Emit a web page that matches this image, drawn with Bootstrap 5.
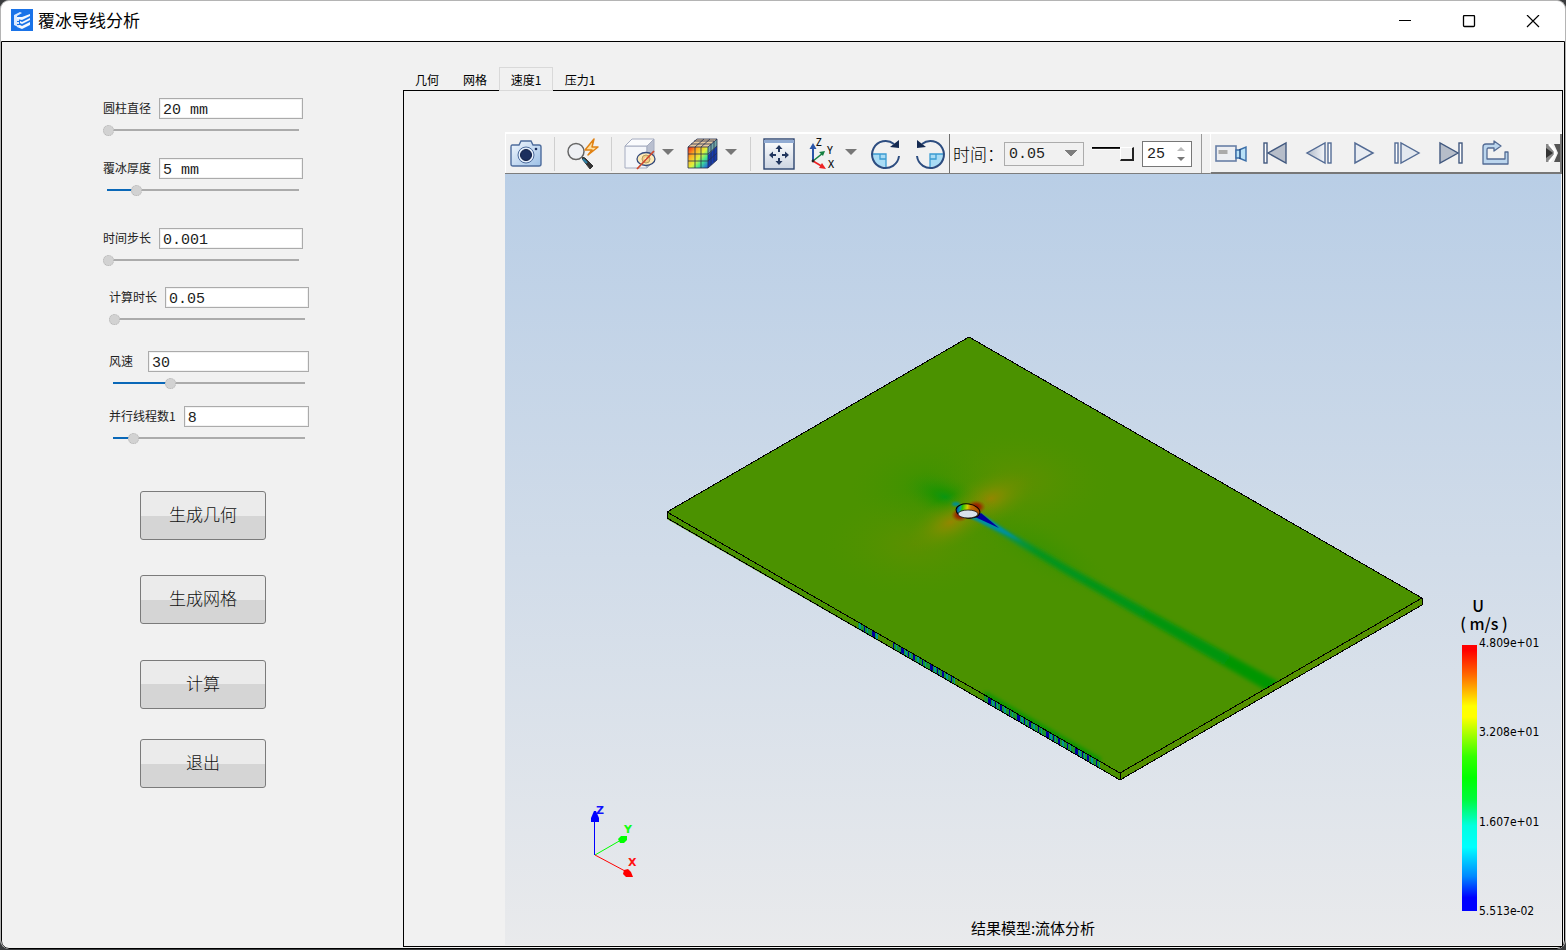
<!DOCTYPE html>
<html lang="zh-CN">
<head>
<meta charset="utf-8">
<meta name="viewport" content="width=device-width, initial-scale=1">
<title>覆冰导线分析</title>
<link href="https://cdn.jsdelivr.net/npm/bootstrap@5.3.0/dist/css/bootstrap.min.css" rel="stylesheet">
<style>
  :root { --ui: "Noto Sans CJK SC", sans-serif; --mono: "Liberation Mono", "Noto Sans CJK SC", monospace; }
  body { background: #3a3c3e; font-family: var(--ui); color: #000; font-size: 12px; }
  .win { min-height: calc(100vh - 1px); background: #fff; border: 1px solid #b4b4b4; border-bottom: 0; border-radius: 9px; overflow: hidden; }
  .titlebar { height: 40px; padding: 0 0 2px 10px; }
  .titlebar h1 { font-size: 17px; line-height: 24px; font-weight: 400; margin: 0 0 0 5px; }
  .winbtn { width: 64px; height: 38px; padding: 0; border: 0; background: none; }
  .winbody { background: #f1f1f1; border: 1px solid #000; border-radius: 0 0 8px 8px; padding: 0 1px 1px 0; }
  .side { width: 401px; flex: none; padding-top: 56px; }
  .params { display: grid; grid-template-rows: 60px 70px 59px 64px 55px 60px; padding-left: 101px; }
  .param { width: 200px; }
  .param.inset { margin-left: 6px; }
  .param label { line-height: 20px; color: #222; white-space: nowrap; }
  .param .lab-gap { margin-right: 8px; }
  .param .lab-gap-wide { margin-right: 15px; }
  .field { min-width: 0; height: 21px; border: 1px solid #ababab; border-radius: 0; background: #fff; box-shadow: inset 0 0 0 1px #f2f2f2; padding: 3px 3px 0; font: 15px/18px var(--mono); color: #222; }
  .slide { -webkit-appearance: none; appearance: none; display: block; width: 196px; height: 16px; margin: 3px 0 0; background: none; }
  .slide::-webkit-slider-runnable-track { height: 2px; background: linear-gradient(90deg, transparent 4px, #0a68b8 4px, #0a68b8 var(--fill), #ababab var(--fill)); }
  .slide::-webkit-slider-thumb { -webkit-appearance: none; width: 11px; height: 11px; margin-top: -4px; border: 1px dotted #b4b4b4; border-radius: 50%; background: #d2d2d2; }
  .actions { display: grid; grid-template-rows: 84px 85px 79px 49px; padding: 25px 0 0 138px; }
  .act { width: 126px; height: 49px; padding: 0 0 3px; border: 1px solid #7b7b7b; border-radius: 3px; background: linear-gradient(#ebebeb 50%, #d5d5d5 50%); font-size: 17px; line-height: 24px; color: #111; font-weight: 300; }
  .tabs { padding-top: 25px; margin-bottom: -1px; position: relative; }
  .tabs button { height: 24px; padding: 1px 10px 0; border: 1px solid transparent; border-bottom: 0; background: none; line-height: 18px; color: #000; flex: none; width: 48px; white-space: nowrap; }
  .tabs button.active, .tabs button.wide-tab { width: 54px; }
  .tabs button.active { background: #f1f1f1; border-color: #d9d9d9; border-bottom: 1px solid #d9d9d9; }
  .pane { border: 1px solid #000; padding: 41px 0 1px 101px; min-width: 0; }
  .tools { height: 42px; border-top: 2px solid #fff; border-bottom: 1px solid #7d7d7d; }
  .tool-a { padding: 0 3px 0 4px; border-left: 1px solid #fff; border-right: 1px solid #6f6f6f; height: 39px; }
  .tool-a svg { overflow: visible; }
  .ic { width: 32px; height: 32px; padding: 0; border: 0; background: none; flex: none; line-height: 0; }
  .ic + .ic { margin-left: 12px; }
  .drop { width: 24px; height: 32px; padding: 0 0 4px; border: 0; background: none; margin-right: 7px; flex: none; line-height: 0; }
  .sep { width: 1px; height: 34px; background: #cfcfcf; margin: 0 12px; flex: none; }
  .drop + .sep { margin-left: 0; }
  .tool-b { height: 39px; padding: 0 9px 0 3px; border-right: 1px solid #9a9a9a; }
  .tool-b label { width: 51px; font-size: 17px; line-height: 24px; font-weight: 300; white-space: nowrap; color: #000; }
  .timesel { -webkit-appearance: none; appearance: none; width: 80px; height: 24px; border: 1px solid #acacac; border-radius: 0; padding: 2px 4px 0; font: 15px/20px var(--mono); color: #222;
    background: linear-gradient(to bottom right, #7d7d7d 50%, transparent 50%) 66px 7px/6px 6px no-repeat, linear-gradient(to bottom left, #7d7d7d 50%, transparent 50%) 60px 7px/6px 6px no-repeat, #f1f1f1; }
  .speed { -webkit-appearance: none; appearance: none; width: 42px; height: 16px; margin: 0 8px; background: none; }
  .speed::-webkit-slider-runnable-track { height: 14px; background: linear-gradient(#000 1px, #555 2px, #fff 2px, #fff 3px, transparent 3px); }
  .speed::-webkit-slider-thumb { -webkit-appearance: none; width: 14px; height: 14px; background: #f1f1f1; border: 1px solid #fff; border-right: 2px solid #222; border-bottom: 2px solid #222; }
  .spin { width: 50px; height: 26px; border: 1px solid #777; background: #fff; padding: 0 6px 0 4px; }
  .spin input { width: 26px; border: 0; padding: 2px 0 0; background: none; font: 15px/20px var(--mono); color: #222; outline: 0; }
  .tool-c { margin-left: 8px; height: 40px; margin-bottom: -1px; padding-left: 4px; border-left: 1px solid #fff; border-bottom: 2px solid #777; border-right: 2px solid #777; overflow: hidden; }
  .more { width: 14px; height: 22px; padding: 0; border: 0; background: none; line-height: 0; }
  .scene { position: relative; background: linear-gradient(#b9cee6, #e9eaec); min-height: 480px; margin-right: 1px; }
  .scene > svg { position: absolute; inset: 0; width: 100%; height: 100%; }
  .caption { position: absolute; left: 0; right: 0; bottom: 7px; text-align: center; font-size: 15px; line-height: 20px; }
  .legend { position: absolute; right: 17px; bottom: 34px; width: 82px; }
  .legend-head { width: 50px; margin: 0 0 13px -3px; text-align: center; font-size: 16px; font-weight: 500; white-space: nowrap; }
  .legend-head div { line-height: 18px; }
  .legend-head div:first-child { padding-right: 12px; }
  .ramp { width: 15px; height: 266px; background: linear-gradient(#f00 2%, #f60 11%, #ff0 23%, #ff0 27%, #3f0 42%, #0f0 50%, #00fa3c 58%, #00ffe0 68%, #0ff 76%, #08f 87%, #00f 95%); }
  .ticks { height: 284px; margin: -10px 0 -8px 2px; font: 12px/16px "DejaVu Sans Condensed", "DejaVu Sans", sans-serif; font-stretch: condensed; }
</style>
</head>
<body>
<div class="win d-flex flex-column">
  <header class="titlebar d-flex align-items-center">
    <svg width="22" height="22" viewBox="0 0 22 22" aria-hidden="true"><rect width="22" height="22" fill="#1a73e8"/><path d="M3 6l6-3 2 1-5 3v10l1 1-4-2z" fill="#dceaff"/><path d="M6 8h5l8-3v2l-8 4-5-1zM9 12l2 1 8-4v2l-8 4-2-1zM9 16l2 1 8-4v3l-8 4-5-2v-2z" fill="#f5f9ff"/><path d="M7 10v8" stroke="#dceaff" stroke-width="2" stroke-dasharray="2 1"/></svg>
    <h1>覆冰导线分析</h1>
    <div class="ms-auto d-flex">
      <button class="winbtn" type="button" aria-label="最小化"><svg width="14" height="14"><path d="M1 5.500h12" stroke="#000"/></svg></button>
      <button class="winbtn" type="button" aria-label="最大化"><svg width="14" height="14"><rect x="1.5" y=".5" width="11" height="11" rx="1" fill="none" stroke="#000" stroke-width="1.3"/></svg></button>
      <button class="winbtn" type="button" aria-label="关闭"><svg width="14" height="14"><path d="M1 0l12 12M13 0L1 12" stroke="#000" stroke-width="1.2"/></svg></button>
    </div>
  </header>

  <div class="winbody d-flex flex-grow-1">
    <form class="side">
      <div class="params">
        <div class="param"><div class="d-flex"><label class="lab-gap" for="p1">圆柱直径</label><input class="field flex-fill" id="p1" value="20 mm"></div><input type="range" class="slide" aria-label="圆柱直径" value="0" style="--fill:4px"></div>
        <div class="param"><div class="d-flex"><label class="lab-gap" for="p2">覆冰厚度</label><input class="field flex-fill" id="p2" value="5 mm"></div><input type="range" class="slide" aria-label="覆冰厚度" value="15" style="--fill:34px"></div>
        <div class="param"><div class="d-flex"><label class="lab-gap" for="p3">时间步长</label><input class="field flex-fill" id="p3" value="0.001"></div><input type="range" class="slide" aria-label="时间步长" value="0" style="--fill:4px"></div>
        <div class="param inset"><div class="d-flex"><label class="lab-gap" for="p4">计算时长</label><input class="field flex-fill" id="p4" value="0.05"></div><input type="range" class="slide" aria-label="计算时长" value="0" style="--fill:4px"></div>
        <div class="param inset"><div class="d-flex"><label class="lab-gap-wide" for="p5">风速</label><input class="field flex-fill" id="p5" value="30"></div><input type="range" class="slide" aria-label="风速" value="30" style="--fill:60px"></div>
        <div class="param inset"><div class="d-flex"><label class="lab-gap" for="p6">并行线程数1</label><input class="field flex-fill" id="p6" value="8"></div><input type="range" class="slide" aria-label="并行线程数1" value="10" style="--fill:24px"></div>
      </div>
      <div class="actions">
        <button class="act" type="button">生成几何</button>
        <button class="act" type="button">生成网格</button>
        <button class="act" type="button">计算</button>
        <button class="act" type="button">退出</button>
      </div>
    </form>

    <main class="d-flex flex-column flex-grow-1 overflow-hidden">
      <div class="tabs d-flex" role="tablist">
        <button type="button" role="tab">几何</button>
        <button type="button" role="tab">网格</button>
        <button type="button" role="tab" class="active" aria-selected="true">速度1</button>
        <button type="button" role="tab" class="wide-tab">压力1</button>
      </div>
      <section class="pane d-flex flex-column flex-grow-1">
        <div class="tools d-flex">
          <div class="tool-a d-flex align-items-center">
            <button class="ic" type="button" aria-label="截图"><svg width="32" height="32"><defs><linearGradient id="cam" x1="0" y1="0" x2="1" y2="1"><stop stop-color="#f2f7fd"/><stop offset="1" stop-color="#9cc0e6"/></linearGradient></defs><path d="M2 7h7l2-4h10l2 4h6q2 0 2 2v17q0 2-2 2H3q-2 0-2-2V9q0-2 1-2z" fill="url(#cam)" stroke="#4d6c9c" stroke-width="1.4"/><circle cx="16" cy="17" r="8" fill="#e4eefa" stroke="#4d6c9c"/><circle cx="16" cy="17" r="5.5" fill="#1b2f5e" stroke="#0e1d42"/><circle cx="26" cy="11" r="1.3" fill="#1b2f5e"/></svg></button>
            <span class="sep"></span>
            <button class="ic" type="button" aria-label="快速缩放"><svg width="32" height="32"><path d="M15 19l3 1 8 8-3 3-7-9z" fill="#333" stroke="#333"/><path d="M16 21l4 4" stroke="#2a7fa5" stroke-width="2"/><circle cx="9" cy="13.500" r="8" fill="#eef0f4" stroke="#666" stroke-width="1.5"/><path d="M27 1L18 12h7l-4 5 10-8h-6z" fill="#ffe0a0" stroke="#e08214" stroke-width="1.5" stroke-linejoin="round"/></svg></button>
            <span class="sep"></span>
            <button class="ic" type="button" aria-label="显示隐藏"><svg width="32" height="32"><path d="M1 8h22v22H1z" fill="#f4f6fa" stroke="#a5acc0"/><path d="M1 8l7-7h22l-7 7z" fill="#fafbfd" stroke="#a5acc0"/><path d="M30 1l-7 7v22l7-8z" fill="#b9bfcf" stroke="#a5acc0"/><ellipse cx="22" cy="21" rx="9" ry="6.500" fill="#fdeab8" stroke="#344a7c" stroke-width="1.3"/><circle cx="22" cy="21" r="4" fill="#f3cd80" stroke="#b39a62"/><circle cx="22" cy="21" r="1.500" fill="#fff"/><path d="M30 13L13 31" stroke="#d04a2e" stroke-width="1.8"/></svg></button>
            <button class="drop" type="button" aria-label="显示选项"><svg width="12" height="6"><path d="M0 0h12L6 6z" fill="#777"/></svg></button>
            <button class="ic" type="button" aria-label="云图"><svg width="32" height="32"><defs><linearGradient id="cub" x1="0" y1=".1" x2="1" y2="1"><stop stop-color="#f0351c"/><stop offset=".25" stop-color="#ffae20"/><stop offset=".5" stop-color="#dff23c"/><stop offset=".7" stop-color="#44e98e"/><stop offset="1" stop-color="#1b50ea"/></linearGradient></defs><path d="M1 9h20v21H1z" fill="url(#cub)"/><path d="M1 9l9-8h20l-9 8z" fill="#e6c8a0"/><path d="M21 9l9-8v21l-9 8z" fill="#173bb0"/><path d="M21 9l9-8v7l-9 9z" fill="#71a9a8"/><path d="M1 9h20v21H1zM1 16h20l9-8M1 23h20l9-8M8 9v21M14 9v21M1 9l9-8h20l-9 8M8 9l9-8M14 9l9-8M4 6h20v21M7 3h20v21M21 30l9-8V1" fill="none" stroke="#26304d" stroke-opacity=".8"/></svg></button>
            <button class="drop" type="button" aria-label="云图选项"><svg width="12" height="6"><path d="M0 0h12L6 6z" fill="#777"/></svg></button>
            <span class="sep"></span>
            <button class="ic" type="button" aria-label="适应窗口"><svg width="32" height="32"><defs><linearGradient id="fit" x1="0" y1="0" x2="0" y2="1"><stop stop-color="#fff"/><stop offset="1" stop-color="#cdd5e2"/></linearGradient></defs><rect x="1" y="1" width="30" height="30" fill="url(#fit)" stroke="#2d4570" stroke-width="1.4"/><path d="M1 3.500h30" stroke="#91abd3" stroke-width="3"/><path d="M16 8v6M16 20v6M7 17h6M19 17h6" stroke="#22365e" stroke-width="2"/><path d="M12.500 11L16 7l3.500 4zM12.500 23l3.500 4 3.500-4zM10 13.500L6 17l4 3.500zM22 13.500l4 3.500-4 3.500z" fill="#22365e"/></svg></button>
            <button class="ic" type="button" aria-label="视图方向"><svg width="32" height="32"><path d="M6 23V8" stroke="#2b55a8" stroke-width="2"/><path d="M2.500 11L6 5l3.500 6z" fill="#2b55a8"/><path d="M6 23l10-8" stroke="#158040" stroke-width="1.6"/><path d="M18 13l-6 1 4 4z" fill="#158040"/><path d="M6 23l10 6" stroke="#e22" stroke-width="1.6"/><path d="M19 31l-7-1 3-5z" fill="#e22"/><circle cx="6" cy="23" r="1.400" fill="#222"/><g font-family="Noto Sans" font-size="10" font-weight="500" fill="#111"><text x="9" y="8">Z</text><text x="20" y="16">Y</text><text x="21" y="30">X</text></g></svg></button>
            <button class="drop" type="button" aria-label="视图选项"><svg width="12" height="6"><path d="M0 0h12L6 6z" fill="#777"/></svg></button>
            <button class="ic" type="button" aria-label="顺时针旋转"><svg width="32" height="32"><path d="M2 16h14v13Q3 29 2 16z" fill="#a9dcf5"/><path d="M2 16h14v13M10 16v5h6" fill="none" stroke="#3a9bd1" stroke-width="1.3"/><path d="M29 18a13.500 13.500 0 1 1-5-12" fill="none" stroke="#2d4d80" stroke-width="2"/><path d="M29 2v8l-9-1z" fill="#152a52"/></svg></button>
            <button class="ic" type="button" aria-label="逆时针旋转"><svg width="32" height="32"><path d="M30 16H16v13q13 0 14-13z" fill="#a9dcf5"/><path d="M30 16H16v13M22 16v5h-6" fill="none" stroke="#3a9bd1" stroke-width="1.3"/><path d="M3 18a13.500 13.500 0 1 0 5-12" fill="none" stroke="#2d4d80" stroke-width="2"/><path d="M3 2v8l9-1z" fill="#152a52"/></svg></button>
          </div>
          <div class="tool-b d-flex align-items-center">
            <label for="tm">时间：</label>
            <select id="tm" class="timesel"><option>0.05</option></select>
            <input type="range" class="speed" aria-label="帧位置" value="100">
            <div class="spin d-flex align-items-center justify-content-between"><input type="text" aria-label="帧率" value="25"><svg width="8" height="14"><path d="M0 4h8L4 0z" fill="#bbb"/><path d="M0 10h8l-4 4z" fill="#777"/></svg></div>
          </div>
          <div class="tool-c d-flex align-items-center flex-grow-1">
            <svg width="0" height="0" class="position-absolute"><defs><linearGradient id="pl"><stop stop-color="#aeb8c8"/><stop offset="1" stop-color="#f4f6fa"/></linearGradient></defs></svg>
            <button class="ic" type="button" aria-label="录制"><svg width="32" height="32"><rect x="1" y="9" width="20" height="15" fill="#eceef2" stroke="#687fa6" stroke-width="1.6"/><rect x="3.500" y="13" width="9" height="4" fill="#aaa"/><path d="M21 13h3l7-3v14l-7-3h-3z" fill="#b8e1f7" stroke="#3b6ea8" stroke-width="1.4"/><path d="M25 12v10" stroke="#234d86" stroke-width="1.5"/></svg></button>
            <button class="ic" type="button" aria-label="第一帧"><svg width="32" height="32"><path d="M27 6v20L9 16z" fill="#b6bdc9" stroke="#42597f" stroke-width="1.4"/><rect x="5" y="6" width="3" height="20" fill="#fff" stroke="#42597f" stroke-width="1.400"/></svg></button>
            <button class="ic" type="button" aria-label="上一帧"><svg width="32" height="32"><path d="M22 6v20L4 16z" fill="url(#pl)" stroke="#536b94" stroke-width="1.4"/><rect x="25" y="6" width="3" height="20" fill="#fff" stroke="#536b94" stroke-width="1.400"/></svg></button>
            <button class="ic" type="button" aria-label="播放"><svg width="32" height="32"><path d="M8 6v20l18-10z" fill="#e8ecf2" stroke="#536b94" stroke-width="1.5"/></svg></button>
            <button class="ic" type="button" aria-label="下一帧"><svg width="32" height="32"><path d="M10 6v20l18-10z" fill="#e3e8ef" stroke="#536b94" stroke-width="1.4"/><rect x="4" y="6" width="3" height="20" fill="#fff" stroke="#536b94" stroke-width="1.400"/></svg></button>
            <button class="ic" type="button" aria-label="最后一帧"><svg width="32" height="32"><path d="M5 6v20l18-10z" fill="#b6bdc9" stroke="#42597f" stroke-width="1.4"/><rect x="24" y="6" width="3" height="20" fill="#fff" stroke="#42597f" stroke-width="1.400"/></svg></button>
            <button class="ic" type="button" aria-label="导出"><svg width="32" height="32"><path d="M7 7h8V4l7 5-7 5v-3h-6q-1 0-1 2v9h18v-7h3v12H4V10q0-3 3-3z" fill="#bcd6ee" stroke="#536b94" stroke-width="1.3" stroke-linejoin="round"/></svg></button>
            <button class="more ms-auto" type="button" aria-label="更多"><svg width="14" height="22"><path d="M0 2h3l6 9-6 9H0z" fill="#888"/><path d="M0 6l7 5-7 5z" fill="#333"/><path d="M8 2h6v18H8l4-9z" fill="#555"/><path d="M3 2l6 7v4l-6 7" fill="none" stroke="#fff" stroke-width="2.500"/></svg></button>
          </div>
        </div>

        <div class="scene flex-grow-1">
          <svg viewBox="505 174 1056 771" role="img" aria-label="流速分布云图">
            <defs>
              <clipPath id="top"><path d="M969 337L1422 598 1120 773 667 512z"/></clipPath>
              <clipPath id="edge"><path d="M858 622l20 12v6l-20-12zM893 642l62 36v6l-62-36zM984 695l116 67v6l-116-67z"/></clipPath>
              <radialGradient id="gr"><stop stop-color="#009614"/><stop offset=".3" stop-color="#109400" stop-opacity=".75"/><stop offset="1" stop-color="#3c9300" stop-opacity="0"/></radialGradient>
              <radialGradient id="or"><stop stop-color="#a08400"/><stop offset=".3" stop-color="#8b8d00" stop-opacity=".75"/><stop offset="1" stop-color="#5b9300" stop-opacity="0"/></radialGradient>
              <radialGradient id="rd"><stop stop-color="#900"/><stop offset=".5" stop-color="#9a2800" stop-opacity=".8"/><stop offset="1" stop-color="#a05000" stop-opacity="0"/></radialGradient>
              <linearGradient id="wake" gradientUnits="userSpaceOnUse" x1="980" y1="516" x2="1275" y2="688"><stop stop-color="#009090"/><stop offset=".1" stop-color="#009360"/><stop offset=".2" stop-color="#009420"/><stop offset="1" stop-color="#009600"/></linearGradient>
              <linearGradient id="ring"><stop stop-color="#0a30b0"/><stop offset=".15" stop-color="#00a0a0"/><stop offset=".25" stop-color="#2cc000"/><stop offset=".45" stop-color="#d0d000"/><stop offset=".6" stop-color="#c07000"/><stop offset="1" stop-color="#a04400"/></linearGradient>
              <pattern id="bars" width="29" height="20" patternUnits="userSpaceOnUse"><path fill="#1a9630" d="M0 0h29v20H0z"/><path fill="#0000a0" d="M2 0h3v20H2zM9 0h1v20H9zM14 0h2v20h-2zM23 0h1v20h-1z"/><path fill="#009898" d="M6 0h2v20H6zM11 0h1v20h-1zM18 0h2v20h-2zM26 0h1v20h-1z"/></pattern>
              <filter id="b1" x="-20%" y="-20%" width="140%" height="140%"><feGaussianBlur stdDeviation="1"/></filter>
              <filter id="b3" x="-20%" y="-20%" width="140%" height="140%"><feGaussianBlur stdDeviation="2"/></filter>
            </defs>
            <path d="M667 512l453 261v7L667 519z" fill="#4a9100"/>
            <path d="M1422 598l-302 175v7l302-175z" fill="#559000"/>
            <path d="M969 337L1422 598 1120 773 667 512z" fill="#4b9200"/>
            <g clip-path="url(#top)">
              <ellipse cx="930" cy="487" rx="80" ry="46" fill="url(#gr)" opacity=".22"/>
              <ellipse cx="1018" cy="482" rx="95" ry="55" fill="url(#or)" opacity=".22"/>
              <ellipse cx="915" cy="544" rx="95" ry="52" fill="url(#or)" opacity=".2"/>
              <ellipse cx="1045" cy="552" rx="80" ry="26" transform="rotate(30 1045 552)" fill="url(#gr)" opacity=".2"/>
              <ellipse cx="945" cy="497" rx="44" ry="22" transform="rotate(20 945 497)" fill="url(#gr)" opacity=".85"/>
              <ellipse cx="990" cy="499" rx="48" ry="26" transform="rotate(-22 990 499)" fill="url(#or)" opacity=".85"/>
              <ellipse cx="951" cy="522" rx="48" ry="25" transform="rotate(-26 951 522)" fill="url(#or)" opacity=".85"/>
              <path d="M976 513l92 53 211 116-10 10-203-118-81-50z" fill="url(#wake)" filter="url(#b3)"/>
              <path d="M968 517l54 25-40-28z" fill="#0090a0" filter="url(#b1)"/>
              <path d="M975 517l24 11-18-15z" fill="#00009c"/>
              <path d="M1290 517l115 66" stroke="#009800" stroke-width="3" filter="url(#b1)"/>
              <path d="M984 694l116 67" stroke="#009600" stroke-width="5" filter="url(#b3)"/>
            </g>
            <ellipse cx="976" cy="507" rx="10" ry="7" fill="url(#rd)"/><ellipse cx="960" cy="515" rx="9" ry="7" fill="url(#rd)"/><ellipse cx="956" cy="504" rx="4" ry="2" fill="#009090" filter="url(#b1)"/>
            <ellipse cx="968" cy="511" rx="12" ry="7" transform="rotate(8 968 511)" fill="url(#ring)" stroke="#000"/>
            <ellipse cx="968" cy="514" rx="10" ry="4" fill="#d9e2ec" stroke="#111" stroke-width=".8"/>
            <path d="M850 610h270v180H850z" fill="url(#bars)" clip-path="url(#edge)"/>
            <path d="M969 337L1422 598 1120 773 667 512zM667 512v6l453 262 302-175v-7M1120 773v7" fill="none" stroke="#000" shape-rendering="crispEdges"/>
            <path d="M594.500 855v-35" stroke="#00f"/><path d="M591 822h8v-4l-3-7h-2l-3 7z" fill="#00f"/>
            <path d="M595 855l26-15" stroke="#0f0"/><path d="M627 836v4l-3 3h-4l-2-4 3-3z" fill="#0f0"/>
            <path d="M595 855l30 16" stroke="#f00"/><path d="M633 877h-7l-3-3 1-4 4-1 3 3z" fill="#f00"/>
            <g font-family="DejaVu Sans" font-size="11" font-weight="700"><text x="596" y="814" fill="#11f">Z</text><text x="624" y="833" fill="#1f1">Y</text><text x="628" y="866" fill="#f11">X</text></g>
          </svg>
          <div class="legend">
            <div class="legend-head"><div>U</div><div>( m/s )</div></div>
            <div class="d-flex">
              <div class="ramp"></div>
              <div class="ticks d-flex flex-column justify-content-between"><span>4.809e+01</span><span>3.208e+01</span><span>1.607e+01</span><span>5.513e-02</span></div>
            </div>
          </div>
          <div class="caption">结果模型:流体分析</div>
        </div>
      </section>
    </main>
  </div>
</div>
<script src="https://cdn.jsdelivr.net/npm/bootstrap@5.3.0/dist/js/bootstrap.bundle.min.js"></script>
</body>
</html>
